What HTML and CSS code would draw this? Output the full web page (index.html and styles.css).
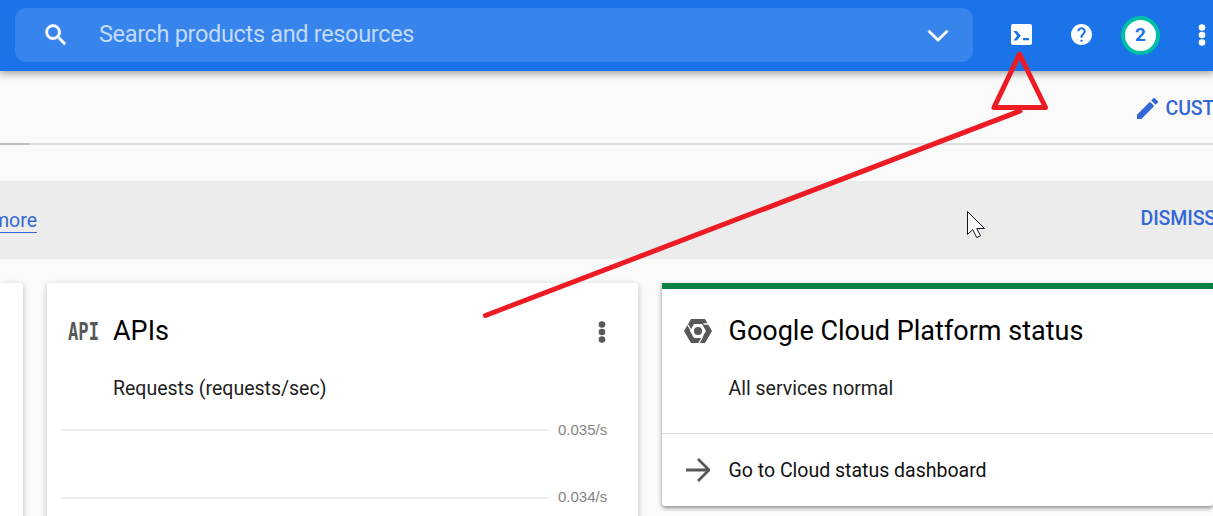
FILE: index.html
```html
<!DOCTYPE html>
<html lang="en">
<head>
<meta charset="utf-8">
<title>Cloud Console dashboard</title>
<link rel="stylesheet" href="styles.css">
</head>
<body>
<header class="topbar">
  <div class="search">
    <svg class="search-icon" viewBox="0 0 24 24"><path fill="#fff" stroke="#fff" stroke-width=".5" d="M15.500 14h-.79l-.28-.27A6.470 6.470 0 0 0 16 9.500 6.500 6.500 0 1 0 9.500 16c1.610 0 3.090-.59 4.230-1.570l.27.28v.79l5 4.990L20.490 19l-4.990-5zm-6 0a4.500 4.500 0 1 1 0-9 4.500 4.500 0 0 1 0 9z"/></svg>
    <span class="placeholder">Search products and resources</span>
    <svg class="chevron" viewBox="0 0 22 14"><path d="M1.500 1.700 11 11l9.500-9.300" fill="none" stroke="#fff" stroke-width="2.800"/></svg>
  </div>
  <svg class="shell" viewBox="0 0 21 21"><rect width="21" height="21" rx="2.200" fill="#fff"/><path d="M2.300 7h3.500l4 4.800-4 4.800H2.300l3.900-4.800zM12 14h6v2.300h-6z" fill="#1a73e8"/></svg>
  <svg class="help" viewBox="2 2 20 20"><path fill="#fff" d="M12 2C6.480 2 2 6.480 2 12s4.480 10 10 10 10-4.480 10-10S17.520 2 12 2zm1 17h-2v-2h2v2zm2.070-7.750-.9.920C13.450 12.900 13 13.500 13 15h-2v-.5c0-1.100.450-2.100 1.170-2.830l1.240-1.260c.370-.360.590-.860.590-1.410 0-1.100-.9-2-2-2s-2 .9-2 2H8c0-2.210 1.790-4 4-4s4 1.790 4 4c0 .88-.360 1.680-.930 2.250z"/></svg>
  <span class="count">2</span>
  <svg class="dots top-dots" viewBox="0 0 8 22"><g fill="#fff"><circle cx="4" cy="3.500" r="3.300"/><circle cx="4" cy="11" r="3.300"/><circle cx="4" cy="18.500" r="3.300"/></g></svg>
</header>
<nav class="tabs">
  <span class="tab-edge"></span>
  <div class="customize">
    <svg class="pencil" viewBox="3 3 18 18"><path fill="#3367d6" d="M3 17.250V21h3.750L17.810 9.940l-3.750-3.750L3 17.250zM20.710 7.040a1 1 0 0 0 0-1.410l-2.340-2.340a1 1 0 0 0-1.410 0l-1.830 1.830 3.750 3.750 1.830-1.830z"/></svg>
    <span class="customize-label">CUSTOMIZE</span>
  </div>
</nav>
<section class="banner">
  <div class="more-clip"><a class="more">more</a></div>
  <span class="dismiss">DISMISS</span>
</section>
<main class="cards">
  <article class="card card-left"></article>
  <article class="card card-api">
    <div class="card-head">
      <svg class="api-icon" viewBox="0 0 32 20"><text class="api-text" x="0" y="19" textLength="31" lengthAdjust="spacingAndGlyphs">API</text></svg>
      <h2 class="title">APIs</h2>
      <svg class="dots card-dots" viewBox="0 0 8 22"><g fill="#585858"><circle cx="4" cy="3.500" r="3.300"/><circle cx="4" cy="11" r="3.300"/><circle cx="4" cy="18.500" r="3.300"/></g></svg>
    </div>
    <p class="sub requests">Requests (requests/sec)</p>
    <div class="chart">
      <div class="tick"><i class="grid-line"></i><span class="tick-label">0.035/s</span></div>
      <div class="tick"><i class="grid-line"></i><span class="tick-label">0.034/s</span></div>
    </div>
  </article>
  <article class="card card-status">
    <div class="card-head">
      <svg class="hex" viewBox="0 0 28 24"><path fill="#585858" fill-rule="evenodd" d="M7 0h14l7 12-7 12H7L0 12zM10 5 6 12l4 7h8l4-7-4-7z"/><path d="M3.800 5.800 8.200 13M19.500 5H26M18.500 17.800 14.800 24.500" stroke="#fff" stroke-width="1.300"/><circle cx="14" cy="12" r="4" fill="#585858"/></svg>
      <h2 class="title">Google Cloud Platform status</h2>
    </div>
    <p class="sub normal">All services normal</p>
    <div class="card-link">
      <svg class="arrow" viewBox="0 0 24 24"><path d="M0 12h22M12 1l11 11-11 11" fill="none" stroke="#585858" stroke-width="2.800"/></svg>
      <span class="go">Go to Cloud status dashboard</span>
    </div>
  </article>
</main>
<svg class="annotation" viewBox="0 0 1213 516">
  <path d="M485.500 315.500 1020 111M1019.500 54 994 107.500h51.500z" fill="none" stroke="#ed1c24" stroke-width="5" stroke-linejoin="round" stroke-linecap="round"/>
  <path d="M967.500 211.500v23l5.200-5 4 8 3.800-1.700-3.700-7.300h7.700z" fill="#fff" stroke="#15152a" stroke-width="1"/>
</svg>
</body>
</html>
```

FILE: styles.css
```css
* { box-sizing: border-box; }
body { margin: 0; width: 1213px; height: 516px; overflow: hidden; background: #fafafa; font-family: Roboto, sans-serif; color: #212121; position: relative; }
svg { display: block; flex: none; }
span, h2, p { white-space: nowrap; }
.topbar { height: 71px; background: #1a73e8; display: flex; align-items: center; padding-left: 15px; position: relative; z-index: 1; box-shadow: 0 1px 8px 1px rgba(0,0,0,.4); }
.search { width: 958px; height: 54px; margin-bottom: 1px; border-radius: 11px; background: #3684ec; display: flex; align-items: center; flex: none; }
.search-icon { width: 28px; height: 28px; margin-left: 26.500px; }
.placeholder { margin-left: 29.500px; margin-top: -3px; font-size: 23.500px; line-height: 30px; color: #c3dafa; letter-spacing: -.33px; }
.chevron { width: 22px; height: 14px; margin: 2px 24.500px 0 auto; }
.shell { width: 21px; height: 21px; margin: -2px 0 0 38px; }
.help { width: 21px; height: 21px; margin: -2px 0 0 39px; }
.count { width: 39px; height: 39px; margin: -1px 0 0 29px; flex: none; border: 4px solid #00bfa5; border-radius: 50%; background: #fff; color: #1a73e8; font-size: 19px; font-weight: 700; line-height: 30px; text-align: center; }
.dots { width: 8px; height: 22px; }
.top-dots { margin: -2px 0 0 37.500px; }
.tabs { height: 74px; border-bottom: 2px solid #dedede; display: flex; justify-content: space-between; }
.tab-edge { width: 29px; height: 2px; background: #bdbdbd; align-self: flex-end; margin-bottom: -2px; }
.customize { width: 76px; display: flex; align-items: center; height: 74px; overflow: hidden; }
.pencil { width: 21px; height: 21px; }
.customize-label { margin-left: 7.500px; font-size: 19.500px; font-weight: 500; color: #3367d6; letter-spacing: -.1px; }
.banner { height: 78px; margin-top: 36px; background: #ececec; display: flex; justify-content: space-between; color: #3367d6; }
.more-clip { width: 37px; padding-top: 26px; overflow: hidden; display: flex; justify-content: flex-end; }
.more { font-size: 19.500px; line-height: 27px; height: 26px; border-bottom: 1px solid #3367d6; }
.dismiss { width: 72.500px; overflow: hidden; font-size: 19.500px; line-height: 75px; font-weight: 500; letter-spacing: -.1px; }
.cards { margin-top: 24px; display: grid; grid-template-columns: 23px 591px 551px; column-gap: 24px; }
.card { background: #fff; border-radius: 3px; box-shadow: 0 2px 6px rgba(0,0,0,.25); }
.card-left { border-radius: 0 3px 3px 0; }
.card-api { height: 250px; }
.card-left { height: 250px; }
.card-head { display: flex; align-items: center; height: 96px; }
.api-icon { width: 32px; height: 20px; margin-left: 20.500px; overflow: visible; }
.api-text { font-family: "DejaVu Sans Mono", monospace; font-size: 25px; font-weight: 700; fill: #585858; }
.title { margin: 0; font-size: 27px; line-height: 32px; font-weight: 400; color: #000; }
.card-api .title { margin-left: 13.500px; }
.card-dots { margin: 1px 32px 0 auto; }
.sub { margin: 0; font-size: 19.500px; line-height: 24px; }
.requests { margin: -2px 0 0 66px; }
.chart { padding: 17px 30px 0 15px; }
.tick { display: flex; align-items: center; height: 22px; margin-bottom: 45.500px; }
.grid-line { flex: none; width: 487px; height: 2px; background: #ededed; margin-top: 2px; }
.tick-label { margin-left: 9px; font-family: "Liberation Sans", sans-serif; font-size: 15px; color: #858585; }
.card-status { height: 223px; border-top: 6px solid #0b8043; border-radius: 0 0 3px 3px; box-shadow: 0 2px 4px rgba(0,0,0,.45); }
.card-status .card-head { height: 84px; }
.hex { width: 28px; height: 24px; margin-left: 22px; }
.card-status .title { margin-left: 16.500px; }
.normal { margin: 4px 0 0 66.500px; }
.card-link { margin-top: 32px; height: 73px; border-top: 1px solid #dfdfdf; display: flex; align-items: center; }
.arrow { width: 24px; height: 24px; margin-left: 24px; }
.go { margin-left: 18.500px; font-size: 19.500px; color: #111; }
.annotation { position: absolute; inset: 0; z-index: 2; width: 1213px; height: 516px; }
```
